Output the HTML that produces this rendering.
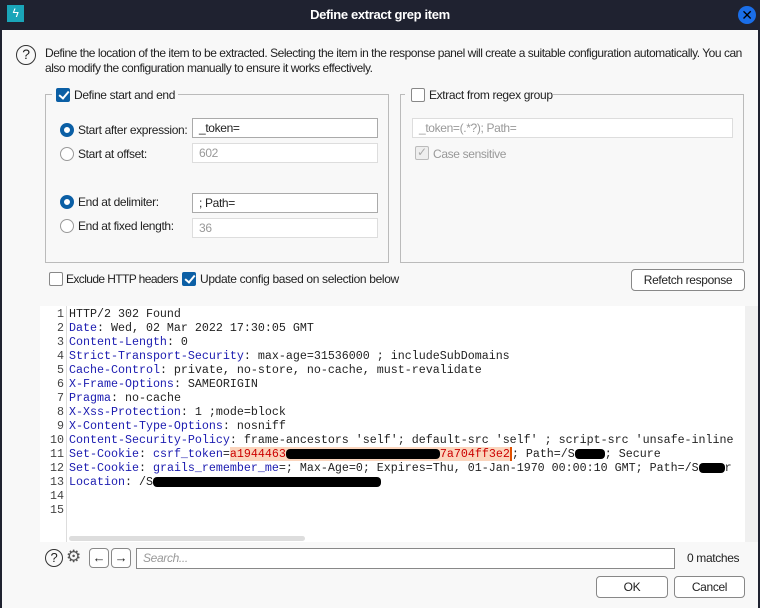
<!DOCTYPE html>
<html><head><style>
*{box-sizing:border-box;margin:0;padding:0}
body{width:760px;height:608px;background:#1f2230;font-family:"Liberation Sans","DejaVu Sans",sans-serif;font-size:12px;letter-spacing:-0.35px;color:#222;position:relative;overflow:hidden}
.a{position:absolute}
#title{left:0;top:0;width:760px;height:30px;background:#1f2230}
#main{left:2px;top:30px;width:756px;height:578px;background:#f8f8f8}
.t{position:absolute;white-space:nowrap}
.cb{position:absolute;width:14px;height:14px;border:1px solid #888;border-radius:2px;background:#fff}
.cb.on{background:#0b5fa5;border-color:#0b5fa5}
.cb.on::after{content:"";position:absolute;left:4px;top:0px;width:4px;height:8px;border:solid #fff;border-width:0 2px 2px 0;transform:rotate(40deg)}
.rb{position:absolute;width:14px;height:14px;border:1px solid #999;border-radius:50%;background:#fff}
.rb.on{border:4px solid #0b5fa5}
.in{position:absolute;height:20px;border:1px solid #aaa;background:#fff;padding:2px 6px;font-size:12px}
.in.dis{border-color:#ddd;color:#999}
.btn{position:absolute;height:22px;border:1px solid #888;border-radius:4px;background:#fff;text-align:center;line-height:20px;font-size:12px}
.grp{position:absolute;border:1px solid #bbb}
#code{font-family:"Liberation Mono","DejaVu Sans Mono",monospace;font-size:11.67px;line-height:14px;letter-spacing:0}
.k{color:#1b1bb0}
.ln{position:absolute;left:40px;width:24px;text-align:right;color:#444}
.bl{display:inline-block;background:#000;height:10px;border-radius:4px;vertical-align:middle}
</style></head><body>
<div class="a" id="title">
 <div class="a" style="left:7px;top:5px;width:17px;height:17px;background:#1aa5b8;color:#fff;font-size:12px;text-align:center;line-height:17px">ϟ</div>
 <div class="t" style="left:0;width:760px;text-align:center;top:7px;color:#fff;font-weight:bold;font-size:13px">Define extract grep item</div>
 <div class="a" style="left:738px;top:6px;width:18px;height:18px;border-radius:50%;background:#1a6ee8;color:#000;font-weight:bold;text-align:center;line-height:18px;font-size:14px">✕</div>
</div>
<div class="a" id="main"></div>
<div class="a" style="left:16px;top:45px;width:20px;height:20px;border:1.5px solid #333;border-radius:50%;text-align:center;line-height:17px;font-size:14px">?</div>
<div class="t" style="left:45px;top:46px;line-height:15px;letter-spacing:-0.47px">Define the location of the item to be extracted. Selecting the item in the response panel will create a suitable configuration automatically. You can<br>also modify the configuration manually to ensure it works effectively.</div>

<div class="grp" style="left:45px;top:94px;width:344px;height:169px"></div>
<div class="a" style="left:52px;top:86px;width:126px;height:16px;background:#f8f8f8"></div>
<div class="cb on" style="left:56px;top:88px"></div>
<div class="t" style="left:74px;top:88px">Define start and end</div>
<div class="rb on" style="left:60px;top:123px"></div><div class="t" style="left:78px;top:123px">Start after expression:</div>
<div class="in" style="left:192px;top:118px;width:186px">_token=</div>
<div class="rb" style="left:60px;top:147px"></div><div class="t" style="left:78px;top:147px">Start at offset:</div>
<div class="in dis" style="left:192px;top:143px;width:186px">602</div>
<div class="rb on" style="left:60px;top:195px"></div><div class="t" style="left:78px;top:195px">End at delimiter:</div>
<div class="in" style="left:192px;top:193px;width:186px">; Path=</div>
<div class="rb" style="left:60px;top:219px"></div><div class="t" style="left:78px;top:219px">End at fixed length:</div>
<div class="in dis" style="left:192px;top:218px;width:186px">36</div>

<div class="grp" style="left:400px;top:94px;width:344px;height:169px"></div>
<div class="a" style="left:405px;top:86px;width:148px;height:16px;background:#f8f8f8"></div>
<div class="cb" style="left:411px;top:88px"></div>
<div class="t" style="left:429px;top:88px">Extract from regex group</div>
<div class="in dis" style="left:412px;top:118px;width:321px">_token=(.*?); Path=</div>
<div class="cb" style="left:415px;top:146px;border-color:#bbb;background:#eee"></div>
<div class="t" style="left:417px;top:145px;color:#aaa">✓</div>
<div class="t" style="left:433px;top:147px;color:#999">Case sensitive</div>

<div class="cb" style="left:49px;top:272px"></div><div class="t" style="left:66px;top:272px;letter-spacing:-0.6px">Exclude HTTP headers</div>
<div class="cb on" style="left:182px;top:272px"></div><div class="t" style="left:200px;top:272px">Update config based on selection below</div>
<div class="btn" style="left:631px;top:269px;width:114px">Refetch response</div>

<div class="a" style="left:40px;top:306px;width:705px;height:236px;background:#fff"></div>
<div class="a" style="left:745px;top:306px;width:13px;height:236px;background:#f0f0f0"></div>
<div class="a" style="left:66px;top:306px;width:1px;height:236px;background:#ddd"></div>
<div class="a" style="left:69px;top:536px;width:236px;height:5px;border-radius:3px;background:#ddd"></div>
<div class="a" id="code" style="left:0;top:307px;width:745px;height:210px;overflow:hidden">
<div class="ln" style="top:0">1</div><div class="ln" style="top:14px">2</div><div class="ln" style="top:28px">3</div><div class="ln" style="top:42px">4</div><div class="ln" style="top:56px">5</div><div class="ln" style="top:70px">6</div><div class="ln" style="top:84px">7</div><div class="ln" style="top:98px">8</div><div class="ln" style="top:112px">9</div><div class="ln" style="top:126px">10</div><div class="ln" style="top:140px">11</div><div class="ln" style="top:154px">12</div><div class="ln" style="top:168px">13</div><div class="ln" style="top:182px">14</div><div class="ln" style="top:196px">15</div>
<div class="a" style="left:69px;top:0;width:666px;overflow:hidden;white-space:pre">HTTP/2 302 Found
<span class="k">Date</span>: Wed, 02 Mar 2022 17:30:05 GMT
<span class="k">Content-Length</span>: 0
<span class="k">Strict-Transport-Security</span>: max-age=31536000 ; includeSubDomains
<span class="k">Cache-Control</span>: private, no-store, no-cache, must-revalidate
<span class="k">X-Frame-Options</span>: SAMEORIGIN
<span class="k">Pragma</span>: no-cache
<span class="k">X-Xss-Protection</span>: 1 ;mode=block
<span class="k">X-Content-Type-Options</span>: nosniff
<span class="k">Content-Security-Policy</span>: frame-ancestors 'self'; default-src 'self' ; script-src 'unsafe-inline
<span class="k">Set-Cookie</span>: <span class="k">csrf_token</span>=<span style="background:#fbd5bd;color:#c00">a1944463<span class="bl" style="width:154px"></span>7a704ff3e2</span><span style="border-left:2px solid #e05000">;</span> Path=/S<span class="bl" style="width:30px"></span>; Secure
<span class="k">Set-Cookie</span>: <span class="k">grails_remember_me</span>=; Max-Age=0; Expires=Thu, 01-Jan-1970 00:00:10 GMT; Path=/S<span class="bl" style="width:26px"></span>r
<span class="k">Location</span>: /S<span class="bl" style="width:228px"></span>
</div></div>

<div class="a" style="left:45px;top:549px;width:18px;height:18px;border:1.5px solid #333;border-radius:50%;text-align:center;line-height:15px;font-size:13px">?</div>
<div class="t" style="left:66px;top:547px;font-size:17px;color:#555">⚙</div>
<div class="btn" style="left:89px;top:548px;width:20px;height:20px;line-height:18px;font-size:13px">←</div>
<div class="btn" style="left:111px;top:548px;width:20px;height:20px;line-height:18px;font-size:13px">→</div>
<div class="in" style="left:136px;top:548px;width:539px;height:21px;border-color:#888;color:#999;font-style:italic">Search...</div>
<div class="t" style="left:687px;top:551px">0 matches</div>
<div class="btn" style="left:596px;top:576px;width:72px">OK</div>
<div class="btn" style="left:674px;top:576px;width:71px">Cancel</div>
</body></html>
